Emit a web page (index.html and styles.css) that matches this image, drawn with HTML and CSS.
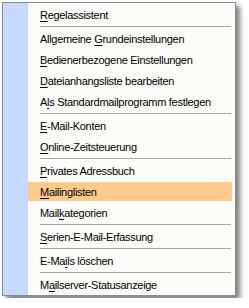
FILE: index.html
```html
<!DOCTYPE html>
<html lang="de">
<head>
  <meta charset="UTF-8">
  <title>Extras-Menü</title>
  <link rel="stylesheet" href="styles.css">
</head>
<body>

  <div class="menu">
    <div class="item"><u>R</u>egelassistent</div>
    <div class="sep"></div>
    <div class="item">Allgemeine <u>G</u>rundeinstellungen</div>
    <div class="item"><u>B</u>edienerbezogene Einstellungen</div>
    <div class="item"><u>D</u>ateianhangsliste bearbeiten</div>
    <div class="item">A<u>l</u>s Standardmailprogramm festlegen</div>
    <div class="sep"></div>
    <div class="item"><u>E</u>-Mail-Konten</div>
    <div class="item"><u>O</u>nline-Zeitsteuerung</div>
    <div class="sep"></div>
    <div class="item"><u>P</u>rivates Adressbuch</div>
    <div class="item active"><u>M</u>ailinglisten</div>
    <div class="item">Mail<u>k</u>ategorien</div>
    <div class="sep"></div>
    <div class="item"><u>S</u>erien-E-Mail-Erfassung</div>
    <div class="sep"></div>
    <div class="item">E-Ma<u>i</u>ls löschen</div>
    <div class="sep"></div>
    <div class="item">M<u>a</u>ilserver-Statusanzeige</div>
  </div>

</body>
</html>
```

FILE: styles.css
```css
body {
  margin: 0;
  background: #ffffff;
  font-family: "Liberation Sans", Arial, sans-serif;
  font-size: 11px;
  letter-spacing: -0.3px;
  color: #000000;
}
.menu {
  display: flex;
  flex-direction: column;
  margin: 2px;
  width: 232px;
  padding-top: 1px;
  border: 1px solid #8c8c8c;
  background: linear-gradient(to right, #c4d9fc 25px, #fcfcf9 25px);
  box-shadow: 4px 4px 5px rgba(0,0,0,0.5);
}
.item {
  height: 19px;
  line-height: 20px;
  margin: 1px 3px 1px 25px;
  padding-left: 12px;
  white-space: nowrap;
}
.item u {
  text-decoration-thickness: 1px;
  text-underline-offset: 2px;
}
.item.active {
  background: #fdcb8c;
}
.sep {
  height: 1px;
  margin: 1px 4px 1px 37px;
  background: #a6a6a6;
}
```
